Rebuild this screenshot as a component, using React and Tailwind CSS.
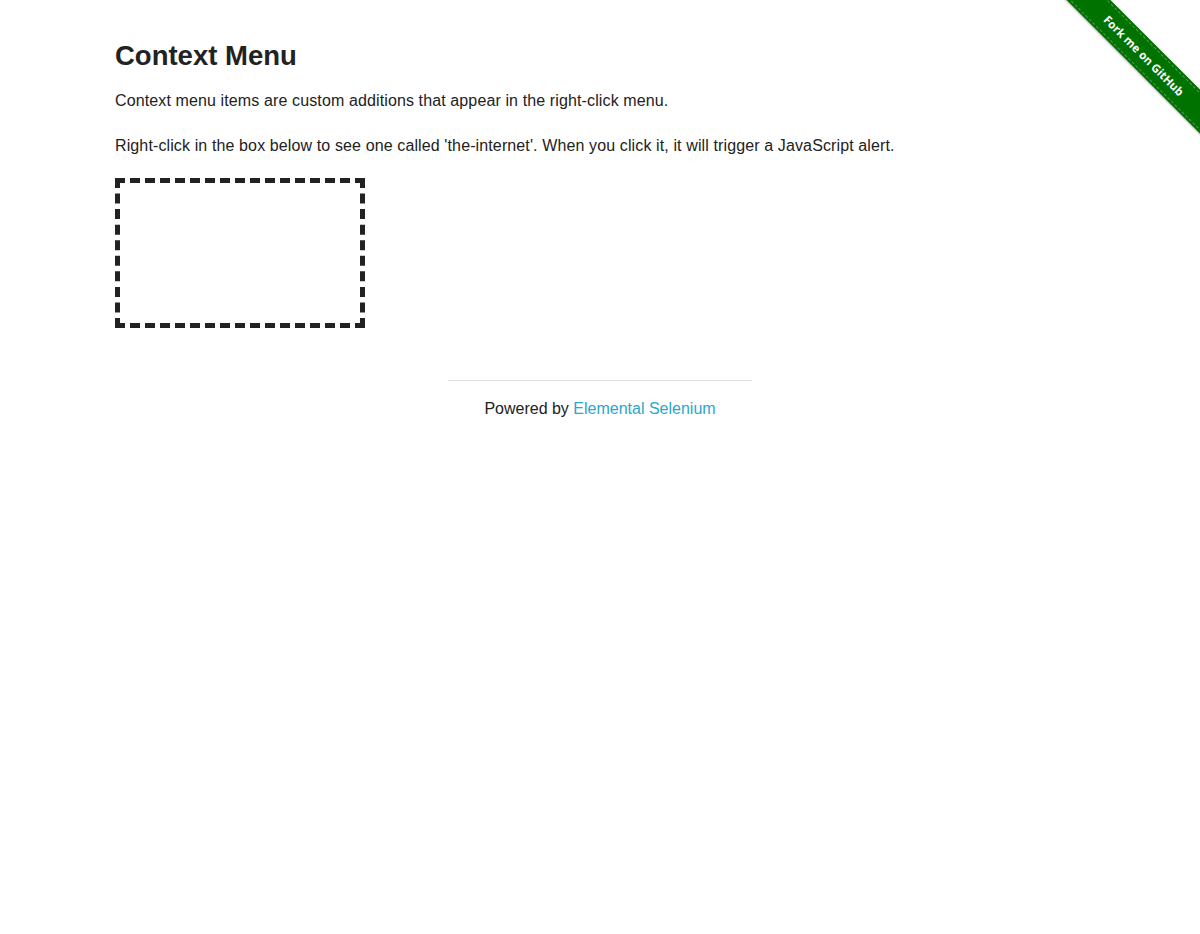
export default function App() {
  return (
    <div className="relative min-h-screen bg-white text-[#222222]" style={{ fontFamily: '"Liberation Sans", Arial, sans-serif' }}>
      <div className="absolute top-0 right-0 w-[149px] h-[149px] overflow-hidden">
        <div className="absolute left-[-17px] top-[40px] w-[220px] h-[31px] rotate-45 bg-[#007200] flex items-center justify-center shadow-[0_1px_2px_rgba(0,0,0,0.3)]">
          <div className="absolute inset-x-0 top-[2px] border-t border-dashed border-white/30" />
          <div className="absolute inset-x-0 bottom-[2px] border-t border-dashed border-white/30" />
          <span className="text-white font-bold text-[11.5px]" style={{ fontFamily: '"Open Sans", "DejaVu Sans", sans-serif' }}>Fork me on GitHub</span>
        </div>
      </div>
      <div className="max-w-[1000px] mx-auto px-[15px] flex flex-col items-start">
        <h3 className="pt-[39px] text-[27.5px] font-bold leading-[34px]">Context Menu</h3>
        <p className="mt-[16px] text-[16px] leading-[24px] tracking-[0.12px]">Context menu items are custom additions that appear in the right-click menu.</p>
        <p className="mt-[21px] text-[16px] leading-[24px] tracking-[0.12px]">Right-click in the box below to see one called 'the-internet'. When you click it, it will trigger a JavaScript alert.</p>
        <div className="mt-[20px] w-[250px] h-[150px] border-[5px] border-dashed border-[#222222]" />
      </div>
      <div className="flex flex-col items-center">
        <div className="mt-[52px] w-[304px] border-t border-[#dddddd]" />
        <div className="mt-[16px] text-[16px] leading-[24px]">
          Powered by <a href="#" className="text-[#2ba6cb]">Elemental Selenium</a>
        </div>
      </div>
    </div>
  );
}
